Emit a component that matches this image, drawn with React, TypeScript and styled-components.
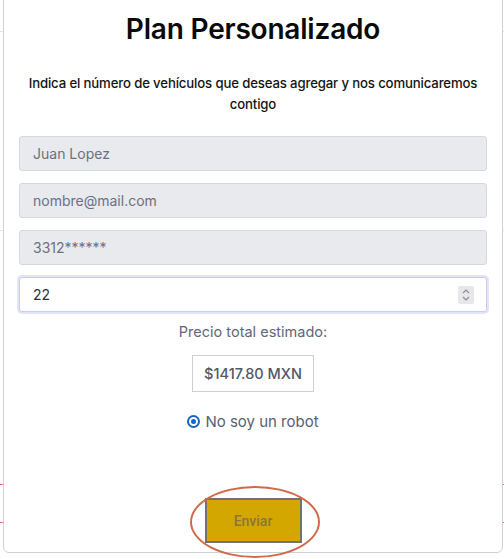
import React from 'react';
import styled, { createGlobalStyle } from 'styled-components';

const GlobalStyle = createGlobalStyle`
  html, body {
    margin: 0;
    padding: 0;
    background: #fff;
    font-family: Inter, "Noto Sans", sans-serif;
  }
  * { box-sizing: border-box; }
`;

// page that sits behind the modal, only its edges show
const Page = styled.div`
  width: 504px;
  height: 559px;
  overflow: hidden;
  position: relative;
  background: #fff;
`;

const PageRow = styled.div<{ $top: number; $color?: string }>`
  height: 1px;
  background: ${p => p.$color || '#e3e3e8'};
  margin-top: ${p => p.$top}px;
`;

const Modal = styled.div`
  position: absolute;
  left: 3px;
  top: -20px;
  width: 500px;
  height: 573px;
  background: #fff;
  border: 1px solid #cfd0d6;
  border-radius: 6px;
  padding: 28px 15px 0;
  display: flex;
  flex-direction: column;
  align-items: center;
`;

const Title = styled.h2`
  margin: 0;
  font-size: 28px;
  font-weight: 600;
  color: #0a0a0a;
  letter-spacing: -0.2px;
  line-height: 40px;
`;

const Subtitle = styled.p`
  margin: 24px -6px 0;
  font-size: 13.2px;
  font-weight: 500;
  color: #141414;
  text-align: center;
  line-height: 21px;
  letter-spacing: -0.15px;
`;

const Form = styled.form`
  width: 100%;
  display: flex;
  flex-direction: column;
  align-items: center;
  margin-top: 21px;
`;

const Fields = styled.div`
  width: 100%;
  display: flex;
  flex-direction: column;
  gap: 12px;
`;

const Field = styled.div<{ $active?: boolean }>`
  height: 35px;
  border: 1px solid ${p => (p.$active ? '#c9cbf2' : '#d5d8de')};
  background: ${p => (p.$active ? '#fff' : '#e8eaee')};
  border-radius: 3px;
  display: flex;
  align-items: center;
  padding: 0 13px;
  font-size: 14px;
  color: ${p => (p.$active ? '#2c2f3a' : '#6d7082')};
  box-shadow: ${p => (p.$active ? '0 0 0 2px #e3e4fb' : 'none')};
  justify-content: space-between;
`;

const Spinner = styled.span`
  width: 16px;
  height: 18px;
  background: #e7e7ea;
  border-radius: 2px;
  display: flex;
  align-items: center;
  justify-content: center;
  margin-right: -1px;
`;

const PriceLabel = styled.div`
  margin-top: 10px;
  font-size: 14.5px;
  color: #62667a;
  line-height: 20px;
`;

const PriceBox = styled.div`
  margin-top: 13px;
  height: 37px;
  padding: 0 11px;
  border: 1px solid #cfcfd3;
  display: flex;
  align-items: center;
  font-size: 14.5px;
  font-weight: 500;
  color: #535768;
`;

const Captcha = styled.label`
  margin-top: 20px;
  display: flex;
  align-items: center;
  gap: 5px;
  font-size: 15px;
  color: #5a5e72;
`;

const Radio = styled.span`
  width: 13px;
  height: 13px;
  border-radius: 50%;
  border: 2px solid #1565c7;
  display: flex;
  align-items: center;
  justify-content: center;
  &::after {
    content: '';
    width: 5px;
    height: 5px;
    border-radius: 50%;
    background: #1565c7;
  }
`;

const SendWrap = styled.div`
  margin-top: 67px;
  position: relative;
  &::before {
    content: '';
    position: absolute;
    left: -15px;
    top: -12px;
    width: 126px;
    height: 68px;
    border: 2px solid #cf6b4a;
    border-radius: 50%;
    pointer-events: none;
  }
`;

const SendButton = styled.button`
  width: 97px;
  height: 45px;
  background: #d4a600;
  border: 2px solid #727272;
  color: #8a7633;
  font-family: Roboto, "Liberation Sans", sans-serif;
  font-size: 14px;
  font-weight: 500;
  cursor: pointer;
`;

const vehicles = 22;
const totalPrice = '1417.80';

export default function App() {
  return (
    <>
      <GlobalStyle />
      <Page>
        <PageRow $top={31} />
        <PageRow $top={198} />
        <PageRow $top={253} $color="#e06a8a" />
        <PageRow $top={37} $color="#e06a8a" />
        <Modal>
          <Title>Plan Personalizado</Title>
          <Subtitle>
            Indica el número de vehículos que deseas agregar y nos comunicaremos contigo
          </Subtitle>
          <Form onSubmit={e => e.preventDefault()}>
            <Fields>
              <Field>Juan Lopez</Field>
              <Field>nombre@mail.com</Field>
              <Field>3312******</Field>
              <Field $active>
                {vehicles}
                <Spinner>
                  <svg width="10" height="14" viewBox="0 0 10 14" fill="none" stroke="#8a8d99" strokeWidth="1.2">
                    <path d="M2 5 L5 2 L8 5" />
                    <path d="M2 9 L5 12 L8 9" />
                  </svg>
                </Spinner>
              </Field>
            </Fields>
            <PriceLabel>Precio total estimado:</PriceLabel>
            <PriceBox>${totalPrice} MXN</PriceBox>
            <Captcha>
              <Radio />
              No soy un robot
            </Captcha>
            <SendWrap>
              <SendButton type="submit">Enviar</SendButton>
            </SendWrap>
          </Form>
        </Modal>
      </Page>
    </>
  );
}
